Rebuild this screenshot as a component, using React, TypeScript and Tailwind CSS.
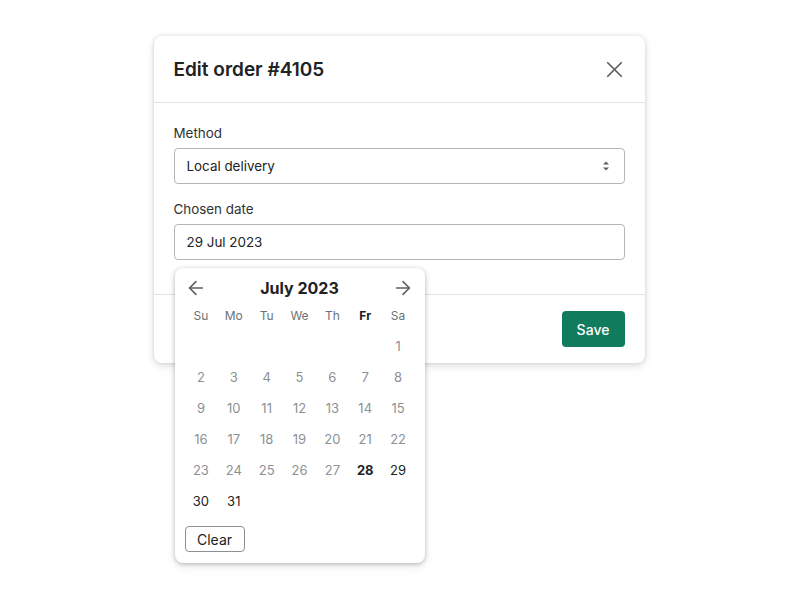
import { ArrowLeft, ArrowRight, X } from "lucide-react";

const days: (number | null)[] = [
  null, null, null, null, null, null, 1,
  2, 3, 4, 5, 6, 7, 8,
  9, 10, 11, 12, 13, 14, 15,
  16, 17, 18, 19, 20, 21, 22,
  23, 24, 25, 26, 27, 28, 29,
  30, 31,
];

const weekdays = ["Su", "Mo", "Tu", "We", "Th", "Fr", "Sa"];

function Calendar() {
  return (
    <div className="absolute left-[1px] top-[44px] z-10 w-[250px] rounded-lg bg-white px-[10px] pt-[7px] pb-[11px] shadow-[0_1px_4px_rgba(0,0,0,0.25),0_4px_10px_rgba(0,0,0,0.08)]">
      <div className="flex h-[25px] items-center justify-between">
        <ArrowLeft size={22} strokeWidth={1.7} className="text-[#5c5f62]" />
        <div className="text-[16px] font-bold text-[#202223]">July 2023</div>
        <ArrowRight size={22} strokeWidth={1.7} className="text-[#5c5f62]" />
      </div>

      <div className="grid grid-cols-7">
        {weekdays.map((w) => (
          <div
            key={w}
            className={
              w === "Fr"
                ? "flex h-[31px] items-center justify-center text-[12px] font-bold text-[#202223]"
                : "flex h-[31px] items-center justify-center text-[12px] text-[#6d7175]"
            }
          >
            {w}
          </div>
        ))}
        {days.map((d, i) => {
          let cls = "text-[#8c9196]";
          if (d === 28) cls = "font-bold text-[#202223]";
          else if (d !== null && d >= 29) cls = "text-[#202223]";
          return (
            <div
              key={i}
              className={"flex h-[31px] items-center justify-center text-[13px] " + cls}
            >
              {d}
            </div>
          );
        })}
      </div>

      <button className="mt-[9px] h-[26px] w-[60px] rounded border border-[#8c9196] bg-white text-[14px] text-[#202223]">
        Clear
      </button>
    </div>
  );
}

export default function App() {
  return (
    <div
      className="flex min-h-[600px] justify-center bg-white pt-[36px]"
      style={{ fontFamily: "Inter, 'Noto Sans', sans-serif" }}
    >
      <div className="mr-[2px] h-fit w-[491px] rounded-lg bg-white shadow-[0_0_4px_rgba(0,0,0,0.12),0_3px_8px_rgba(0,0,0,0.12)]">
        <div className="flex h-[67px] items-center justify-between border-b border-[#e1e3e5] px-5">
          <h1 className="pt-[2px] text-[19px] font-semibold text-[#202223]">Edit order #4105</h1>
          <X size={27} strokeWidth={1.5} className="mr-[-3px] text-[#5c5f62]" />
        </div>

        <div className="px-5 pt-5 pb-[34px]">
          <label className="mb-1 block text-[13.4px] leading-[21px] text-[#303235]">Method</label>
          <div className="flex h-[36px] items-center justify-between rounded border border-[#b3b6ba] px-3 text-[13.4px] text-[#202223]">
            <span>Local delivery</span>
            <svg width="8" height="12" viewBox="0 0 8 12" className="mr-[2px] text-[#5c5f62]">
              <path d="M4 1.5 L7 4.5 H1 Z" fill="currentColor" />
              <path d="M4 10.5 L7 7.5 H1 Z" fill="currentColor" />
            </svg>
          </div>

          <label className="mt-[15px] mb-1 block text-[13.4px] leading-[21px] text-[#303235]">Chosen date</label>
          <div className="relative">
            <div className="flex h-[36px] items-center rounded border border-[#b3b6ba] px-3 text-[13.4px] text-[#202223]">
              29 Jul 2023
            </div>
            <Calendar />
          </div>
        </div>

        <div className="flex justify-end border-t border-[#e1e3e5] px-5 py-4">
          <button className="h-[36px] w-[63px] rounded bg-[#117b5e] text-[14px] font-medium text-white">
            Save
          </button>
        </div>
      </div>
    </div>
  );
}
